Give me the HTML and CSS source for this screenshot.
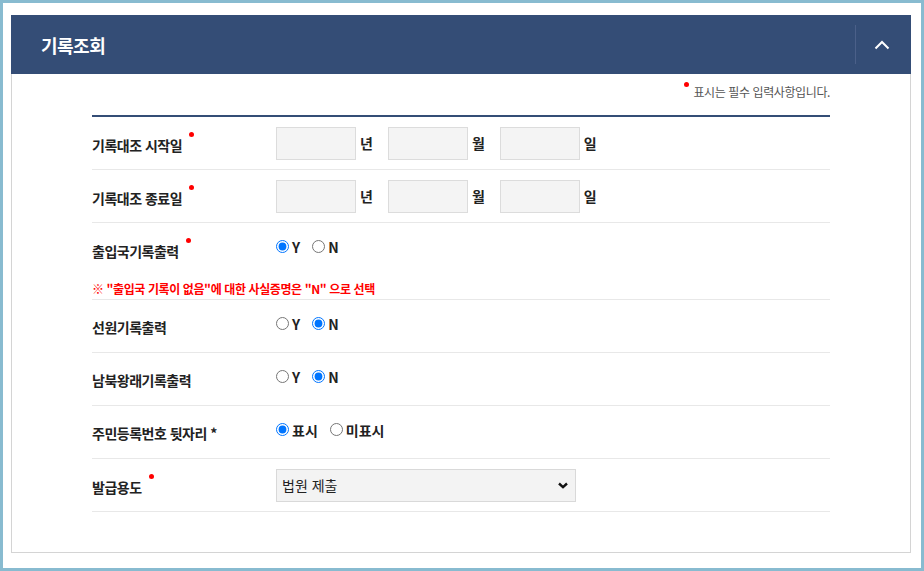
FILE: index.html
```html
<!DOCTYPE html>
<html lang="ko">

<head>
  <meta charset="utf-8">
  <title>기록조회</title>
  <meta name="viewport" content="width=device-width, initial-scale=1">
  <link rel="stylesheet" href="styles.css">
</head>

<body>
  <div class="frame">
    <div class="panel">
      <div class="panel-head">
        <h2 class="panel-title">기록조회</h2>
        <button class="toggle" type="button" aria-label="접기">
          <svg width="16" height="10" viewBox="0 0 16 10">
            <path d="M1.5 8.5 L8 2 L14.5 8.5" fill="none" stroke="#fff" stroke-width="2" />
          </svg>
        </button>
      </div>

      <div class="panel-body">
        <p class="req-note"><span class="dot"></span>표시는 필수 입력사항입니다.</p>

        <div class="form">
          <div class="row">
            <div class="label">기록대조 시작일<span class="dot"></span></div>
            <div class="field">
              <input type="text" class="date-input"><span class="unit">년</span>
              <input type="text" class="date-input"><span class="unit">월</span>
              <input type="text" class="date-input"><span class="unit">일</span>
            </div>
          </div>

          <div class="row">
            <div class="label">기록대조 종료일<span class="dot"></span></div>
            <div class="field">
              <input type="text" class="date-input"><span class="unit">년</span>
              <input type="text" class="date-input"><span class="unit">월</span>
              <input type="text" class="date-input"><span class="unit">일</span>
            </div>
          </div>

          <div class="row-group">
            <div class="row row-plain">
              <div class="label">출입국기록출력<span class="dot"></span></div>
              <div class="field radios">
                <label class="radio"><input type="radio" name="immig" checked>Y</label>
                <label class="radio"><input type="radio" name="immig">N</label>
              </div>
            </div>
            <p class="warn">※ "출입국 기록이 없음"에 대한 사실증명은 "N" 으로 선택</p>
          </div>

          <div class="row">
            <div class="label">선원기록출력</div>
            <div class="field radios">
              <label class="radio"><input type="radio" name="crew">Y</label>
              <label class="radio"><input type="radio" name="crew" checked>N</label>
            </div>
          </div>

          <div class="row">
            <div class="label">남북왕래기록출력</div>
            <div class="field radios">
              <label class="radio"><input type="radio" name="ns">Y</label>
              <label class="radio"><input type="radio" name="ns" checked>N</label>
            </div>
          </div>

          <div class="row">
            <div class="label">주민등록번호 뒷자리 *</div>
            <div class="field radios">
              <label class="radio"><input type="radio" name="rrn" checked>표시</label>
              <label class="radio"><input type="radio" name="rrn">미표시</label>
            </div>
          </div>

          <div class="row">
            <div class="label">발급용도<span class="dot"></span></div>
            <div class="field select-wrap">
              <select class="purpose">
                <option>법원 제출</option>
                <option>기관 제출</option>
                <option>기타</option>
              </select>
              <svg class="select-arrow" width="10" height="7" viewBox="0 0 10 7">
                <path d="M1 1.5 L5 5.2 L9 1.5" fill="none" stroke="#111" stroke-width="2.4" />
              </svg>
            </div>
          </div>
        </div>
      </div>
    </div>
  </div>
</body>

</html>
```

FILE: styles.css
```css
html,
body {
  margin: 0;
  padding: 0;
}

body {
  background-color: #fff;
  color: #222;
  font-family: 'Noto Sans CJK KR', 'Noto Sans', sans-serif;
}

.frame {
  box-sizing: border-box;
  width: 924px;
  height: 571px;
  border: 3px solid #88bbd0;
  padding: 12px 10px 0 8px;
}

.panel {
  width: 900px;
}

.panel-head {
  display: flex;
  align-items: center;
  justify-content: space-between;
  height: 59px;
  background-color: #344d76;
}

.panel-title {
  margin: 0 0 0 30px;
  font-size: 18px;
  font-weight: 700;
  color: #fff;
  letter-spacing: -0.5px;
}

.toggle {
  display: flex;
  align-items: center;
  justify-content: center;
  width: 52px;
  height: 39px;
  margin-right: 4px;
  padding: 0;
  background: none;
  border: none;
  border-left: 1px solid #4b6089;
}

.panel-body {
  border: 1px solid #d4d4d4;
  border-top: none;
  padding: 7px 80px 40px 80px;
}

.req-note {
  margin: 0 0 12px;
  text-align: right;
  font-size: 12px;
  line-height: 22px;
  color: #555;
  letter-spacing: -0.4px;
}

.req-note .dot {
  margin-left: 0;
  margin-right: 4px;
  vertical-align: 10px;
}

.dot {
  display: inline-block;
  width: 5px;
  height: 5px;
  border-radius: 50%;
  background-color: #f00;
  vertical-align: 14px;
  margin-left: 7px;
}

.form {
  border-top: 2px solid #344d76;
}

.row {
  display: flex;
  align-items: center;
  height: 52px;
  border-bottom: 1px solid #e8e8e8;
}

.row-group {
  border-bottom: 1px solid #e8e8e8;
}

.row-plain {
  border-bottom: none;
}

.label {
  width: 184px;
  flex-shrink: 0;
  font-size: 14px;
  font-weight: 700;
  color: #222;
  letter-spacing: -0.5px;
  padding-top: 1px;
}

.field {
  display: flex;
  align-items: center;
}

.date-input {
  box-sizing: border-box;
  width: 80px;
  height: 33px;
  margin: 0;
  background-color: #f4f4f4;
  border: 1px solid #dcdcdc;
}

.unit {
  margin: 0 15px 0 4px;
  font-size: 14px;
  font-weight: 700;
}

.radios {
  margin-bottom: 5px;
}

.radio {
  display: flex;
  align-items: center;
  margin-right: 12px;
  font-size: 14px;
  font-weight: 700;
}

.radio input {
  width: 13px;
  height: 13px;
  margin: 0 3px 0 0;
}

.warn {
  margin: 0;
  padding: 5px 0 1px;
  font-size: 12px;
  line-height: 18px;
  font-weight: 700;
  color: #f00;
  letter-spacing: -0.4px;
}

.select-wrap {
  position: relative;
}

.purpose {
  box-sizing: border-box;
  width: 300px;
  height: 33px;
  padding: 0 5px;
  background-color: #f3f3f3;
  border: 1px solid #d9d9d9;
  border-radius: 0;
  appearance: none;
  font-family: 'Noto Sans CJK KR', sans-serif;
  font-size: 14px;
  color: #222;
}

.select-arrow {
  position: absolute;
  right: 8px;
  top: 13px;
  pointer-events: none;
}
```
